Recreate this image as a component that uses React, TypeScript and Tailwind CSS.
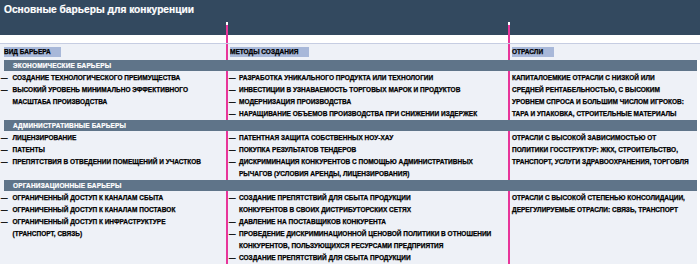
import React from 'react';

// Column widths: 0-226, 226-508, 508-697
const cols = 'grid grid-cols-[226px_282px_189px]';
const pinkLine = 'border-l-2 border-[#e8359a]';

interface Section {
  title: string;
  kinds: string[][];
  methods: string[][];
  branches: string[];
  height: string;
}

const sections: Section[] = [
  {
    title: 'Экономические барьеры',
    kinds: [
      ['Создание технологического преимущества'],
      ['Высокий уровень минимально эффективного', 'масштаба производства'],
    ],
    methods: [
      ['Разработка уникального продукта или технологии'],
      ['Инвестиции в узнаваемость торговых марок и продуктов'],
      ['Модернизация производства'],
      ['Наращивание объемов производства при снижении издержек'],
    ],
    branches: [
      'Капиталоемкие отрасли с низкой или',
      'средней рентабельностью, с высоким',
      'уровнем спроса и большим числом игроков:',
      'тара и упаковка, строительные материалы',
    ],
    height: 'h-[49px]',
  },
  {
    title: 'Административные барьеры',
    kinds: [['Лицензирование'], ['Патенты'], ['Препятствия в отведении помещений и участков']],
    methods: [
      ['Патентная защита собственных ноу-хау'],
      ['Покупка результатов тендеров'],
      ['Дискриминация конкурентов с помощью административных', 'рычагов (условия аренды, лицензирования)'],
    ],
    branches: [
      'Отрасли с высокой зависимостью от',
      'политики госструктур: ЖКХ, строительство,',
      'транспорт, услуги здравоохранения, торговля',
    ],
    height: 'h-[49px]',
  },
  {
    title: 'Организационные барьеры',
    kinds: [
      ['Ограниченный доступ к каналам сбыта'],
      ['Ограниченный доступ к каналам поставок'],
      ['Ограниченный доступ к инфраструктуре', '(транспорт, связь)'],
    ],
    methods: [
      ['Создание препятствий для сбыта продукции', 'конкурентов в своих дистрибуторских сетях'],
      ['Давление на поставщиков конкурента'],
      ['Проведение дискриминационной ценовой политики в отношении', 'конкурентов, пользующихся ресурсами предприятия'],
      ['Создание препятствий для сбыта продукции'],
    ],
    branches: ['Отрасли с высокой степенью консолидации,', 'дерегулируемые отрасли: связь, транспорт'],
    height: 'h-[80px]',
  },
];

const DashList = ({ items, dashWidth }: { items: string[][]; dashWidth: string }) => (
  <div>
    {items.map((lines, i) => (
      <div key={i} className="flex">
        <span className={`${dashWidth} shrink-0`}>—</span>
        <span>
          {lines.map((l, j) => (
            <div key={j}>{l}</div>
          ))}
        </span>
      </div>
    ))}
  </div>
);

// Tick on the dark header: white tip, then pink
const HeaderTick = () => (
  <div className="flex flex-col w-[2px] h-full">
    <div className="h-[3px] bg-white" />
    <div className="flex-1 bg-[#e8359a]" />
  </div>
);

export default function App() {
  return (
    <div className="w-[700px] h-[264px] overflow-hidden bg-white font-['Liberation_Sans',Arial,sans-serif]">
      {/* Title bar */}
      <header className="h-[35px] bg-[#33495f] flex flex-col">
        <h1 className="pl-1 pt-[3px] text-[10.2px] leading-[13px] font-bold text-white [-webkit-text-stroke:0.2px_#fff]">
          Основные барьеры для конкуренции
        </h1>
        <div className={`${cols} mt-auto h-[13px]`}>
          <div />
          <HeaderTick />
          <HeaderTick />
        </div>
      </header>

      {/* White gap */}
      <div className={`${cols} h-[9px] border-b border-[#c6cde2]`}>
        <div />
        <div className={pinkLine} />
        <div className={pinkLine} />
      </div>

      {/* Column headings */}
      <div className={`${cols} h-[16px] bg-[#eef1f7] text-[6.5px] leading-[10px] font-bold uppercase text-black [-webkit-text-stroke:0.25px_#000]`}>
        <div className="pl-1 pt-[3px]">
          <span className="inline-block bg-[#a8b8d9] pr-[10px]">Вид барьера</span>
        </div>
        <div className={`${pinkLine} pl-[2px] pt-[3px]`}>
          <span className="inline-block bg-[#a8b8d9] pr-[11px]">Методы создания</span>
        </div>
        <div className={`${pinkLine} pl-[2px] pt-[3px]`}>
          <span className="inline-block bg-[#a8b8d9] pr-[11px]">Отрасли</span>
        </div>
      </div>

      {sections.map((s) => (
        <section key={s.title} className="w-[697px] bg-[#eef1f7]">
          <div className="ml-1 h-[11px] bg-[#5f7489] pl-[9px] text-[6.5px] leading-[11px] font-bold uppercase tracking-[0.15px] text-white [-webkit-text-stroke:0.2px_#fff]">
            {s.title}
          </div>
          <div className={`${cols} ${s.height} text-[6.5px] leading-[12px] font-bold uppercase text-black whitespace-nowrap [-webkit-text-stroke:0.25px_#000]`}>
            <div className="pl-[1px] pt-[1px]">
              <DashList items={s.kinds} dashWidth="w-[11.5px]" />
            </div>
            <div className={`${pinkLine} pl-[1px] pt-[1px]`}>
              <DashList items={s.methods} dashWidth="w-[10px]" />
            </div>
            <div className={`${pinkLine} pl-[2px] pt-[1px]`}>
              {s.branches.map((l, i) => (
                <div key={i}>{l}</div>
              ))}
            </div>
          </div>
        </section>
      ))}
    </div>
  );
}
